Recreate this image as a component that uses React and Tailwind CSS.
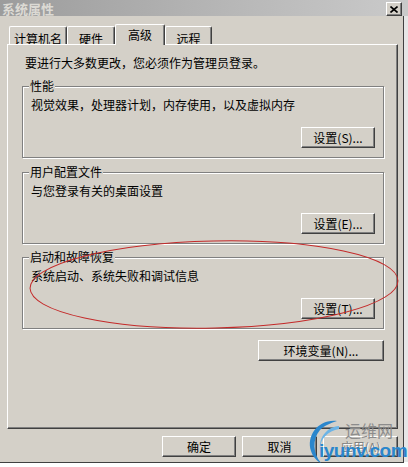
import React from "react";

const font = { fontFamily: '"Noto Sans CJK SC", "Liberation Sans", sans-serif' };

function Btn({ children, className = "", disabled = false }) {
  return (
    <div
      className={
        "flex items-center justify-center h-[21px] bg-[#d4d0c8] border border-t-white border-l-white border-r-[#404040] border-b-[#404040] shadow-[inset_-1px_-1px_0_#808080] text-[12px] leading-[16px] " +
        (disabled ? "text-[#808080] [text-shadow:1px_1px_0_#fff] " : "text-black ") +
        className
      }
    >
      {children}
    </div>
  );
}

function Group({ title, desc, btn }) {
  return (
    <div className="relative w-[362px] h-[72px] border border-[#808080] shadow-[inset_1px_1px_0_#fff,1px_1px_0_#fff] flex flex-col pl-[8px] pr-[8px] pt-[10px]">
      <span className="absolute -top-[9px] left-[6px] px-[1px] bg-[#d4d0c8] text-[12px] leading-[16px] text-black">
        {title}
      </span>
      <div className="text-[12px] leading-[16px] text-black">{desc}</div>
      <div className="flex justify-end mt-[14px]">
        <Btn className="w-[74px]">{btn}</Btn>
      </div>
    </div>
  );
}

function Tab({ label, w, selected }) {
  if (selected) {
    return (
      <div
        className={`relative z-10 -mb-px h-[21px] ${w} bg-[#d4d0c8] border-t border-l border-t-white border-l-white border-r border-r-[#404040] shadow-[inset_-1px_0_0_#808080] rounded-t-[2px] flex justify-center pt-[2px] text-[12px] leading-[16px] text-black`}
      >
        {label}
      </div>
    );
  }
  return (
    <div
      className={`h-[18px] ${w} bg-[#d4d0c8] border-t border-l border-t-white border-l-white border-r border-r-[#404040] shadow-[inset_-1px_0_0_#808080] rounded-t-[2px] flex justify-center pt-[4px] text-[12px] leading-[16px] text-black`}
    >
      {label}
    </div>
  );
}

export default function App() {
  return (
    <div className="relative w-[408px] h-[467px] bg-white overflow-hidden flex flex-col" style={font}>
      {/* title bar */}
      <div className="h-[16px] w-[408px] bg-gradient-to-r from-[#9c9c9c] via-[#b4b4b4] to-[#cacaca] flex items-center justify-between pl-[2px] pr-[6px]">
        <span className="text-[13px] leading-[15px] font-bold text-[#dcdad4]">系统属性</span>
        <div className="w-[16px] h-[14px] mt-[2px] bg-[#d4d0c8] border border-t-white border-l-white border-r-[#404040] border-b-[#404040] shadow-[inset_-1px_-1px_0_#808080] flex items-center justify-center">
          <svg width="8" height="7" viewBox="0 0 8 7">
            <path d="M0.5 0.5 L7.5 6.5 M7.5 0.5 L0.5 6.5" stroke="#000" strokeWidth="1.6" />
          </svg>
        </div>
      </div>

      <div className="flex flex-row h-[446px]">
        {/* dialog body */}
        <div className="w-[403px] h-[446px] bg-[#d4d0c8] flex flex-col pl-[7px] pt-[8px]">
          {/* tabs */}
          <div className="flex items-end h-[20px] pl-[2px]">
            <Tab label="计算机名" w="w-[58px]" />
            <Tab label="硬件" w="w-[48px]" />
            <Tab label="高级" w="w-[50px]" selected />
            <Tab label="远程" w="w-[47px]" />
          </div>
          {/* panel */}
          <div className="w-[391px] h-[385px] border-t border-l border-t-white border-l-white border-r border-b border-r-[#404040] border-b-[#404040] shadow-[inset_-1px_-1px_0_#808080] flex flex-col px-[14px] pt-[10px]">
            <div className="pl-[3px] text-[12px] leading-[16px] text-black">
              要进行大多数更改，您必须作为管理员登录。
            </div>
            <div className="mt-[15px]">
              <Group title="性能" desc="视觉效果，处理器计划，内存使用，以及虚拟内存" btn="设置(S)..." />
            </div>
            <div className="mt-[14px]">
              <Group title="用户配置文件" desc="与您登录有关的桌面设置" btn="设置(E)..." />
            </div>
            <div className="mt-[13px]">
              <Group title="启动和故障恢复" desc="系统启动、系统失败和调试信息" btn="设置(T)..." />
            </div>
            <div className="flex justify-end mt-[11px] w-[362px]">
              <Btn className="w-[126px]">环境变量(N)...</Btn>
            </div>
          </div>
          {/* bottom buttons */}
          <div className="flex justify-start gap-[6px] pl-[155px] mt-[7px]">
            <Btn className="w-[74px]">确定</Btn>
            <Btn className="w-[75px]">取消</Btn>
            <Btn className="w-[75px]" disabled>应用(A)</Btn>
          </div>
        </div>
        <div className="w-[1px] h-[446px] bg-[#404040]" />
        <div className="w-[4px] h-[446px] bg-[#e6e6e6]" />
      </div>
      <div className="h-[1px] w-[404px] bg-[#404040]" />
      <div className="h-[4px] w-[408px] bg-white" />

      {/* red annotation ellipse */}
      <svg className="absolute left-0 top-0 pointer-events-none" width="408" height="467">
        <ellipse cx="214" cy="284.5" rx="184" ry="43.5" fill="none" stroke="#c42a2a" strokeWidth="1" transform="rotate(-1.2 214 284.5)" />
      </svg>

      {/* watermark */}
      <div className="absolute left-[305px] top-[418px] w-[103px] h-[46px] pointer-events-none">
        <svg className="absolute left-0 top-0" width="36" height="46" viewBox="0 0 36 46">
          <path d="M32 3 C13 1 1 18 6 33 C8 39 12 43 16 45 C8 36 7 21 15 12 C20 7 26 5 32 3 Z" fill="#2a86cc" />
          <path d="M34 8 C22 9 14 19 15 31 C15 21 23 13 34 11 Z" fill="#6cb4e6" />
        </svg>
        <span className="absolute left-[40px] top-[3px] text-[16px] leading-[18px] text-[#8c8c8c]">运维网</span>
        <span className="absolute left-[14px] top-[22px] text-[19px] leading-[22px] font-bold tracking-[-0.5px] text-[#2a86cc]" style={{ fontFamily: '"Liberation Sans", sans-serif' }}>
          iyunv.com
        </span>
      </div>
    </div>
  );
}
